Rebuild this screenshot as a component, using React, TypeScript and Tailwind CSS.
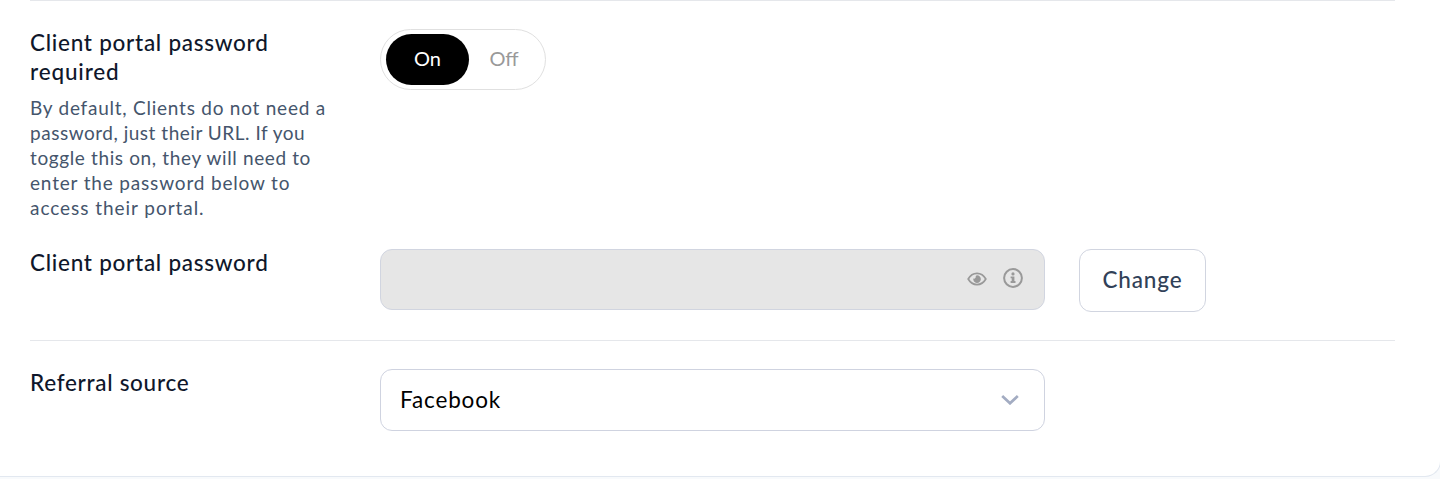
import React from "react";

const Label = ({ children }: { children: React.ReactNode }) => (
  <h3 className="-mt-px text-[22.5px] leading-[29px] font-medium text-slate-900 whitespace-nowrap">
    {children}
  </h3>
);

const EyeIcon = () => (
  <svg className="w-5 h-5" viewBox="0 0 20 20" fill="none">
    <path
      d="M1.2 10C3.2 6.4 6.2 4.4 10 4.4S16.8 6.4 18.8 10C16.8 13.6 13.8 15.6 10 15.6S3.2 13.6 1.2 10Z"
      stroke="#999"
      strokeWidth="1.7"
    />
    <path
      d="M10 6.3A3.8 3.8 0 1 1 6.3 9.5C7.6 10 8.9 9.2 8.7 7.8C8.7 7.1 9.2 6.3 10 6.3Z"
      fill="#999"
    />
  </svg>
);

const InfoIcon = () => (
  <svg className="w-5 h-5" viewBox="0 0 20 20" fill="none">
    <circle cx="10" cy="10" r="8.9" stroke="#999" strokeWidth="2" />
    <circle cx="10" cy="5.9" r="1.6" fill="#999" />
    <path d="M7.6 8.4H11.4V12.9H12.5V14.9H7.6V12.9H8.7V10.3H7.6Z" fill="#999" />
  </svg>
);

const App = () => {
  return (
    <div className="h-[479px] overflow-hidden bg-slate-50 font-['Lato',sans-serif]">
      <div className="w-[1441px] h-[477px] pl-[30px] pr-[45px] bg-white border-r border-b border-slate-200 rounded-br-[16px]">
        <div className="flex h-[249px] pt-7 border-t border-gray-200">
          <div className="w-[350px] shrink-0">
            <Label>
              <span className="tracking-[0.73px]">Client portal password</span>
              <br />
              <span className="tracking-[0.85px]">required</span>
            </Label>
            <p className="mt-[9px] text-[19px] leading-[25px] text-slate-600 whitespace-nowrap">
              <span className="tracking-[0.76px]">By default, Clients do not need a</span>
              <br />
              <span className="tracking-[0.52px]">password, just their URL. If you</span>
              <br />
              <span className="tracking-[0.63px]">toggle this on, they will need to</span>
              <br />
              <span className="tracking-[0.83px]">enter the password below to</span>
              <br />
              <span className="tracking-[0.95px]">access their portal.</span>
            </p>
          </div>
          <div className="flex w-[166px] h-[61px] p-[5px] pt-1 border border-[#e0e0e0] rounded-full text-[20px]">
            <button className="w-[83px] h-[51px] pb-[3px] bg-black text-white rounded-full">
              On
            </button>
            <button className="w-[70px] h-[51px] pb-[3px] text-[#999]">Off</button>
          </div>
        </div>

        <div className="flex items-start h-[91px]">
          <div className="w-[350px] shrink-0">
            <Label>
              <span className="tracking-[0.73px]">Client portal password</span>
            </Label>
          </div>
          <div className="flex w-[665px] h-[61px] justify-end gap-4 pt-[18px] pr-[21px] bg-[#e6e6e6] border border-[#d1d5e0] rounded-[12px]">
            <div className="pt-px">
              <EyeIcon />
            </div>
            <InfoIcon />
          </div>
          <button className="ml-[34px] w-[127px] h-[63px] pb-px border border-[#d1d5e0] rounded-[12px] text-[22.5px] tracking-[0.85px] font-medium text-slate-700">
            Change
          </button>
        </div>

        <div className="flex items-start pt-7 border-t border-gray-200">
          <div className="w-[350px] shrink-0">
            <Label>
              <span className="tracking-[0.7px]">Referral source</span>
            </Label>
          </div>
          <div className="flex w-[665px] h-[62px] items-center justify-between pl-[19px] pr-[25px] border border-[#cfd3e0] rounded-[12px]">
            <span className="text-[22.5px] tracking-[0.85px] text-black">Facebook</span>
            <svg className="w-[18px] h-[10px]" viewBox="0 0 18 10" fill="none">
              <path
                d="M1.2 1L9 8.3L16.8 1"
                stroke="#a3acc2"
                strokeWidth="2.7"
              />
            </svg>
          </div>
        </div>
      </div>
    </div>
  );
};

export default App;
